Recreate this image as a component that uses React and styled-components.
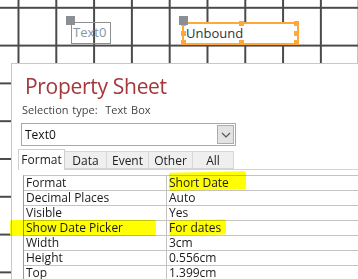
import React from "react";
import styled, { createGlobalStyle } from "styled-components";

const Global = createGlobalStyle`
  html, body { margin: 0; padding: 0; background: #fff; }
  body { font-family: "Open Sans", "Noto Sans", sans-serif; overflow: hidden; }
`;

// design surface with its grid
const Canvas = styled.div`
  position: relative;
  width: 358px;
  height: 279px;
  overflow: hidden;
  background-color: #fff;
  background-image:
    linear-gradient(to right, #4a4a4a 0 1.6px, transparent 1.6px),
    linear-gradient(to bottom, #4a4a4a 0 1.6px, transparent 1.6px);
  background-size: 37.8px 37.8px, 37.8px 37.8px;
  background-position: 17.5px 0, 0 6.8px;
`;

const Handle = styled.div`
  position: absolute;
  left: ${(p) => p.x}px;
  top: ${(p) => p.y}px;
  width: 9px;
  height: 9px;
  background: #8b8e94;
  z-index: 2;
`;

const Control = styled.div`
  position: absolute;
  left: ${(p) => p.x}px;
  top: ${(p) => p.y}px;
  width: ${(p) => p.w}px;
  height: ${(p) => p.h}px;
  box-sizing: border-box;
  border: ${(p) => (p.selected ? "2px solid #ffa83a" : "1px solid #8f8f8f")};
  background: ${(p) => (p.selected ? "#fff" : "transparent")};
  color: ${(p) => (p.selected ? "#2c3440" : "#8594a8")};
  font-size: 13px;
  line-height: ${(p) => (p.selected ? 18 : 19)}px;
  padding-left: ${(p) => (p.selected ? 2 : 1)}px;
  white-space: nowrap;
`;

const Grip = styled.span`
  position: absolute;
  width: 5px;
  height: 5px;
  background: #ffa83a;
  left: ${(p) => p.x};
  top: ${(p) => p.y};
`;

const Sheet = styled.div`
  position: absolute;
  left: 11px;
  top: 63px;
  width: 380px;
  height: 240px;
  display: flex;
  flex-direction: column;
  align-items: flex-start;
  padding-top: 9px;
  background: #fff;
  border-top: 1px solid #c8c8c8;
  border-left: 1px solid #c8c8c8;
  z-index: 3;
`;

const Title = styled.h1`
  margin: 0 0 0 13px;
  font-size: 21px;
  line-height: 26px;
  font-weight: 400;
  color: #a4373a;
  letter-spacing: -0.3px;
`;

const SelectionType = styled.div`
  margin: 4px 0 0 10px;
  font-size: 11px;
  line-height: 14px;
  color: #444;
  word-spacing: 1px;
`;

const Combo = styled.div`
  display: flex;
  align-items: center;
  justify-content: space-between;
  box-sizing: border-box;
  margin: 6px 0 0 9px;
  width: 215px;
  height: 23px;
  border: 1px solid #a9a9a9;
  padding: 0 1px 0 3px;
  font-size: 12px;
  color: #111;
`;

const DropButton = styled.div`
  display: flex;
  align-items: center;
  justify-content: center;
  box-sizing: border-box;
  width: 17px;
  height: 19px;
  background: #e3e3e3;
  border: 1px solid #adadad;
`;

const TabStrip = styled.div`
  display: flex;
  align-items: flex-end;
  align-self: stretch;
  margin: 3px 0 0 6px;
  height: 20px;
  border-bottom: 1px solid #d4d4d4;
`;

const Tab = styled.div`
  box-sizing: border-box;
  width: ${(p) => p.w}px;
  height: ${(p) => (p.active ? 21 : 18)}px;
  margin-bottom: ${(p) => (p.active ? -1 : 0)}px;
  display: flex;
  align-items: center;
  justify-content: center;
  font-size: 12px;
  color: #222;
  background: ${(p) => (p.active ? "#fff" : "#efefef")};
  border: 1px solid ${(p) => (p.active ? "#cfcfcf" : "#d8d8d8")};
  border-bottom: ${(p) => (p.active ? "none" : "1px solid #d4d4d4")};
  border-left-width: ${(p) => (p.first ? 1 : 0)}px;
  padding-bottom: ${(p) => (p.active ? 2 : 0)}px;
`;

const Table = styled.div`
  align-self: stretch;
  margin: 5px 0 0 11px;
  border-top: 1px solid #c4c4c4;
  border-left: 1px solid #9a9a9a;
`;

const Row = styled.div`
  display: grid;
  grid-template-columns: 143px 1fr;
  height: 14px;
  border-bottom: 1px solid #c4c4c4;
`;

const Cell = styled.div`
  position: relative;
  padding-left: 2px;
  font-size: 12px;
  line-height: 14px;
  color: #1a1a1a;
  white-space: nowrap;
  border-right: ${(p) => (p.label ? "1px solid #c4c4c4" : "none")};
`;

const Text = styled.span`
  position: relative;
`;

const Marker = styled.span`
  position: absolute;
  left: ${(p) => p.l}px;
  width: ${(p) => p.w}px;
  top: ${(p) => p.t}px;
  height: ${(p) => p.h}px;
  background: #ffff00;
  mix-blend-mode: multiply;
  border-radius: 2px;
  transform: rotate(${(p) => p.r || 0}deg);
`;

const rows = [
  ["Format", "Short Date"],
  ["Decimal Places", "Auto"],
  ["Visible", "Yes"],
  ["Show Date Picker", "For dates"],
  ["Width", "3cm"],
  ["Height", "0.556cm"],
  ["Top", "1.399cm"],
];

const tabs = [
  ["Format", 47],
  ["Data", 42],
  ["Event", 42],
  ["Other", 44],
  ["All", 41],
];

export default function App() {
  return (
    <Canvas>
      <Global />
      <Handle x={66} y={16} />
      <Control x={71} y={22} w={40} h={22}>Text0</Control>
      <Handle x={179} y={16} />
      <Control x={182} y={22} w={117} h={23} selected>
        Unbound
        <Grip x="-3px" y="-3px" />
        <Grip x="55px" y="-3px" />
        <Grip x="110px" y="-3px" />
        <Grip x="-3px" y="7px" />
        <Grip x="110px" y="7px" />
        <Grip x="-3px" y="16px" />
        <Grip x="55px" y="16px" />
        <Grip x="110px" y="16px" />
      </Control>

      <Sheet>
        <Title>Property Sheet</Title>
        <SelectionType>Selection type:&nbsp; Text Box</SelectionType>
        <Combo>
          Text0
          <DropButton>
            <svg width="10" height="6" viewBox="0 0 10 6">
              <path d="M1 1l4 4 4-4" fill="none" stroke="#555" strokeWidth="1.2" />
            </svg>
          </DropButton>
        </Combo>
        <TabStrip>
          {tabs.map(([t, w], i) => (
            <Tab key={t} w={w} active={i === 0} first={i === 0}>
              {t}
            </Tab>
          ))}
        </TabStrip>
        <Table>
          {rows.map(([k, v], i) => (
            <Row key={k}>
              <Cell label>
                {i === 3 && <Marker l={-14} w={146} t={-1} h={16} />}
                <Text>{k}</Text>
              </Cell>
              <Cell>
                {i === 0 && <Marker l={2} w={77} t={-4} h={18} r={-1} />}
                {i === 3 && <Marker l={2} w={57} t={-1} h={15} r={-1} />}
                <Text>{v}</Text>
              </Cell>
            </Row>
          ))}
        </Table>
      </Sheet>
    </Canvas>
  );
}
